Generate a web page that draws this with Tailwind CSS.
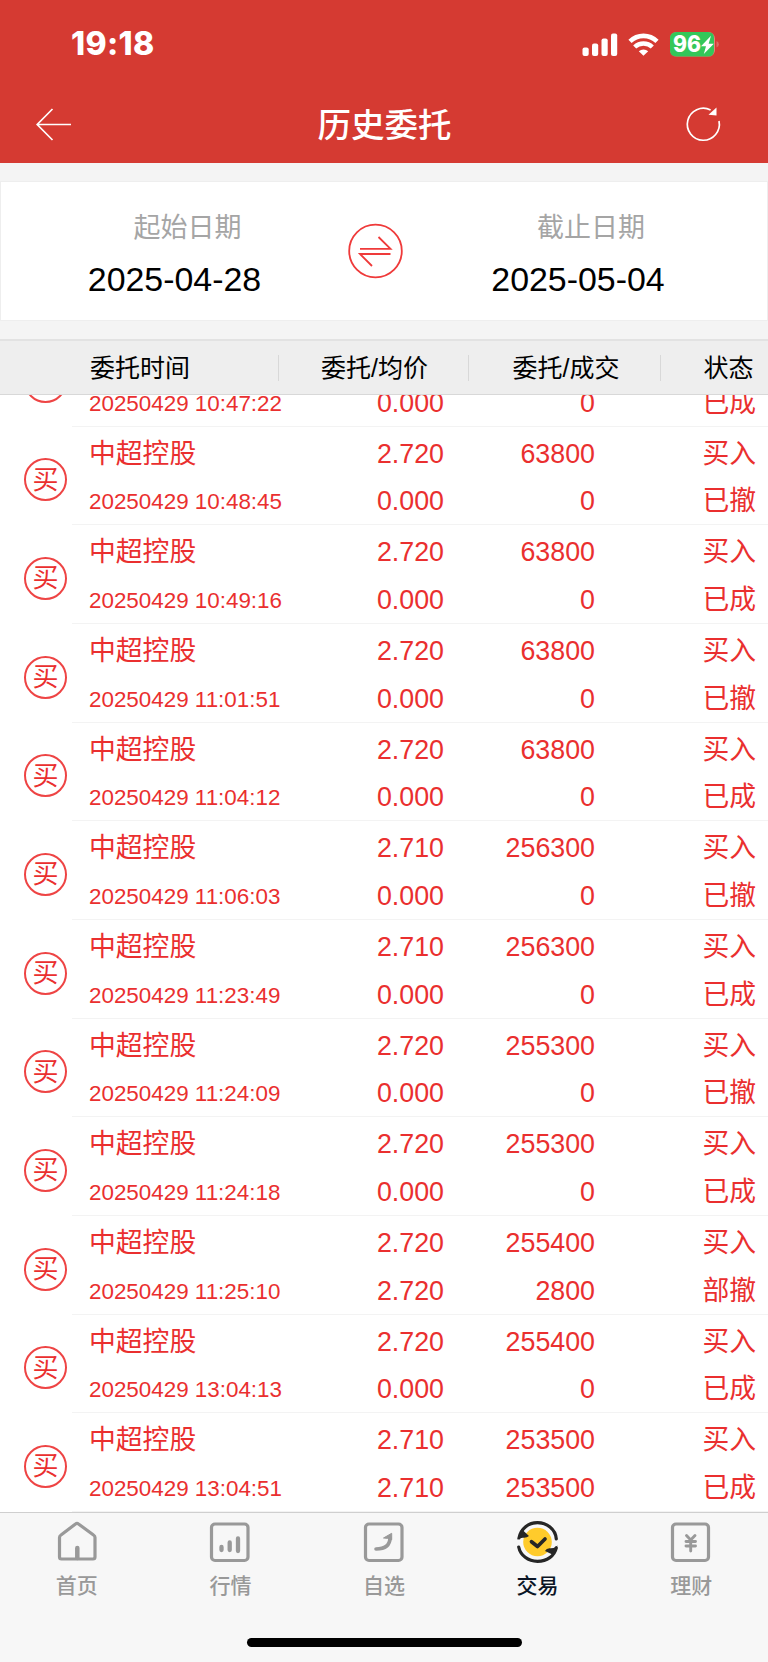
<!DOCTYPE html>
<html lang="zh-CN">
<head>
    <meta charset="UTF-8">
    <meta name="viewport" content="width=device-width, initial-scale=1.0">
    <title>历史委托</title>
    <script src="https://cdn.jsdelivr.net/npm/@tailwindcss/browser@4"></script>
</head>
<body class="w-[768px] h-[1662px] overflow-hidden flex flex-col bg-white font-['Liberation_Sans','Noto_Sans_CJK_SC',sans-serif]">

    <header class="h-[163px] shrink-0 bg-[#d53a32] text-white flex flex-col">
        <!-- barra de estado -->
        <div class="h-[86px] pl-[71px] pr-[49px] flex items-center justify-between">
            <span class="pt-[2px] font-['Inter'] font-extrabold text-[32px] tracking-[0.3px] leading-none">19:18</span>
            <svg class="mt-px" width="138" height="26" viewBox="0 0 138 26" fill="none">
                <g fill="#fff">
                    <rect x="1.5" y="16.5" width="6.2" height="8.5" rx="2"/>
                    <rect x="11" y="12.5" width="6.2" height="12.5" rx="2"/>
                    <rect x="20.5" y="7.5" width="6.2" height="17.5" rx="2"/>
                    <rect x="30" y="2.5" width="6.2" height="22.5" rx="2"/>
                    <path d="M62.500 24.800l-4.700-4.600a7 7 0 0 1 9.400 0z"/>
                </g>
                <path d="M49 10.300a19.500 19.500 0 0 1 27 0" stroke="#fff" stroke-width="4.6"/>
                <path d="M53.700 16a12.700 12.700 0 0 1 17.600 0" stroke="#fff" stroke-width="4.4"/>
                <rect x="89" y="1" width="45" height="24.6" rx="6.5" fill="#e3837e"/>
                <path d="M95.500 1h31.500q6 0 6 6v12.500q0 6-6 6H95.500q-6.500 0-6.500-6.500V7.500Q89 1 95.500 1z" fill="#34c759"/>
                <path d="M135.500 10q2.400 1 2.400 3.300T135.500 16.600z" fill="#dd6a64"/>
                <text x="92" y="21.3" textLength="28" lengthAdjust="spacingAndGlyphs" font-family="Inter" font-weight="800" font-size="22.5" fill="#fff">96</text>
                <path d="M130 4.800l-10 10.400h5l-2.200 7.800 10-10.200h-5.200z" fill="#fff"/>
            </svg>
        </div>
        <div class="h-[77px] px-9 flex items-center justify-between">
            <svg width="36" height="36" viewBox="0 0 36 36" fill="none" stroke="#fff" stroke-width="1.7">
                <path d="M35 17.500H1.500M16.500 2L1.200 17.500 16.500 33"/>
            </svg>
            <h1 class="ml-[15px] pt-[2px] text-[33.5px] font-medium leading-none">历史委托</h1>
            <svg class="mr-[8px]" width="42" height="42" viewBox="0 0 42 42" fill="none">
                <path d="M28.600 6A16 16 0 1 0 37 17" stroke="#fff" stroke-width="1.7"/>
                <path d="M34.500 3.500v8l-8-.8z" fill="#fff"/>
            </svg>
        </div>
    </header>

    <!-- rango de fechas -->
    <section class="h-[176px] shrink-0 bg-[#f4f4f4] pt-[18px]">
        <div class="h-[140px] border border-[#eeeeee] bg-white flex">
            <div class="w-[347px] pt-[24px] flex flex-col items-center">
                <span class="h-[44px] leading-[44px] pl-[26px] text-[27px] text-[#a5a5a5]">起始日期</span>
                <span class="h-[58px] leading-[58px] text-[33.9px] text-black">2025-04-28</span>
            </div>
            <svg class="mt-[41px]" width="56" height="56" viewBox="0 0 56 56" fill="none" stroke="#ef3a3a" stroke-width="1.8">
                <circle cx="27.5" cy="28" r="26.3"/>
                <path d="M12 25.800h30.500L30.500 14M42.500 31h-30.500L24 43"/>
            </svg>
            <div class="w-[348px] pt-[24px] flex flex-col items-center">
                <span class="h-[44px] leading-[44px] pl-[26px] text-[27px] text-[#a5a5a5]">截止日期</span>
                <span class="h-[58px] leading-[58px] text-[33.9px] text-black">2025-05-04</span>
            </div>
        </div>
    </section>

    <div class="h-[56px] shrink-0 bg-[#eeeeee] border-t-2 border-b border-t-[#e2e2e2] border-b-[#d8d8d8] flex items-center text-center text-[25px] leading-[26px] text-black">
        <span class="w-[279px] pl-[2px] border-r border-[#d8d8d8]">委托时间</span>
        <span class="w-[190px] pl-[2px] border-r border-[#d8d8d8]">委托/均价</span>
        <span class="w-[192px] pl-[3px] border-r border-[#d8d8d8]">委托/成交</span>
        <span class="w-[107px] pl-[28px]">状态</span>
    </div>

    <main id="lista" class="h-[1117px] shrink-0 overflow-hidden flex flex-col justify-end text-[#ea2f2f]"></main>

    <nav class="h-[150px] shrink-0 bg-[#f7f7f7] border-t border-[#cfcfcf] flex flex-col items-center">
        <div class="w-full grid grid-cols-5 pt-[7px] text-[21px] leading-[30px] font-medium text-[#999999]">
            <a class="flex flex-col items-center gap-[7px]">
                <svg width="44" height="44" viewBox="0 0 44 44" fill="none" stroke="#999" stroke-width="3.2" stroke-linejoin="round">
                    <path d="M4.500 17.500Q4.500 16 6 15L20.500 4Q22 2.800 23.500 4L38.500 15Q40 16 40 17.500V37q0 2-2 2H6.500q-2 0-2-2z"/>
                    <path d="M22.300 38V28" stroke-width="4.5" stroke-linecap="round"/>
                </svg>
                <span>首页</span>
            </a>
            <a class="flex flex-col items-center gap-[7px]">
                <svg width="44" height="44" viewBox="0 0 44 44" fill="none" stroke="#999">
                    <rect x="3.5" y="4" width="36.5" height="36.5" rx="3.5" stroke-width="3.2"/>
                    <path d="M13.500 27v3M21.700 22.500V30M30 18.500V31" stroke-width="4.3" stroke-linecap="round"/>
                </svg>
                <span>行情</span>
            </a>
            <a class="flex flex-col items-center gap-[7px]">
                <svg width="44" height="44" viewBox="0 0 44 44" fill="none" stroke="#999">
                    <rect x="3.5" y="4" width="36.5" height="36.5" rx="3.5" stroke-width="3.2"/>
                    <path d="M14 29C22.500 29 28 25.500 28 17.500" stroke-width="3.6" stroke-linecap="round"/>
                    <path d="M21.500 18L29.700 13.300v6.500q-4-2-8.200-1.800z" fill="#999" stroke-linejoin="round"/>
                </svg>
                <span>自选</span>
            </a>
            <a class="flex flex-col items-center gap-[7px] text-[#0b1526]">
                <svg width="44" height="44" viewBox="0 0 44 44" fill="none" stroke="#262626" stroke-linecap="round">
                    <circle cx="21.5" cy="22" r="14.3" fill="#ffcb2b" stroke="none"/>
                    <path d="M3 18C5 8.500 12.500 2.700 21.500 2.700S39.500 9 40.300 19M2.700 27C4.500 35.500 12 41.300 21.500 41.300S38.500 36 40.300 28" stroke-width="3.2"/>
                    <path d="M1.300 19.500L5.500 9l7.500 7q-2 2-5.500 1.800T1.300 19.500zM41.700 25.500L37.500 35 29 31q1.500-3 5.200-2.700T41.700 25.500z" fill="#262626" stroke="none"/>
                    <path d="M15.500 21.700l6 4.800 7.500-7.500" stroke-width="3.7" stroke-linejoin="round"/>
                </svg>
                <span>交易</span>
            </a>
            <a class="flex flex-col items-center gap-[7px]">
                <svg width="44" height="44" viewBox="0 0 44 44" fill="none" stroke="#999">
                    <rect x="3.5" y="4" width="36" height="36.5" rx="3.5" stroke-width="3.2"/>
                    <path d="M17.500 15.500l4.200 4.500 4.300-4.500M21.700 20v11M17 21.500h9.500M17 26h9.500" stroke-width="2.9" stroke-linecap="round"/>
                </svg>
                <span>理财</span>
            </a>
        </div>
        <div class="w-[275px] h-[9px] mt-[37px] rounded-full bg-black"></div>
    </nav>

    <script>
        // hora, precio, precio medio, cantidad, ejecutado, estado
        const ordenes = [
            ["10:47:22", "2.720", "0.000", "63800", "0", "已成"],
            ["10:48:45", "2.720", "0.000", "63800", "0", "已撤"],
            ["10:49:16", "2.720", "0.000", "63800", "0", "已成"],
            ["11:01:51", "2.720", "0.000", "63800", "0", "已撤"],
            ["11:04:12", "2.720", "0.000", "63800", "0", "已成"],
            ["11:06:03", "2.710", "0.000", "256300", "0", "已撤"],
            ["11:23:49", "2.710", "0.000", "256300", "0", "已成"],
            ["11:24:09", "2.720", "0.000", "255300", "0", "已撤"],
            ["11:24:18", "2.720", "0.000", "255300", "0", "已成"],
            ["11:25:10", "2.720", "2.720", "255400", "2800", "部撤"],
            ["13:04:13", "2.720", "0.000", "255400", "0", "已成"],
            ["13:04:51", "2.710", "2.710", "253500", "253500", "已成"]
        ];

        const lista = document.getElementById("lista");
        ordenes.forEach(item => {
            const [hora, precio, medio, cantidad, ejecutado, estado] = item;
            lista.innerHTML += `
            <div class="h-[98.67px] shrink-0 flex">
                <div class="w-[72px] pl-6 pt-[31.5px]">
                    <div class="size-[43px] rounded-full border-2 border-[#ee4444] flex items-center justify-center text-[26px] leading-none">买</div>
                </div>
                <div class="flex-1 border-b border-[#f3f3f3] pt-[4px] pl-[17px] grid grid-cols-[215px_140px_151px_1fr] auto-rows-[47.5px] leading-[47.5px] text-[26.8px] whitespace-nowrap">
                    <span>中超控股</span>
                    <span class="text-right">${precio}</span>
                    <span class="text-right">${cantidad}</span>
                    <span class="text-right pr-[12px]">买入</span>
                    <span class="text-[22.4px]">20250429 ${hora}</span>
                    <span class="text-right">${medio}</span>
                    <span class="text-right">${ejecutado}</span>
                    <span class="text-right pr-[12px]">${estado}</span>
                </div>
            </div>`;
        });
    </script>

</body>
</html>
